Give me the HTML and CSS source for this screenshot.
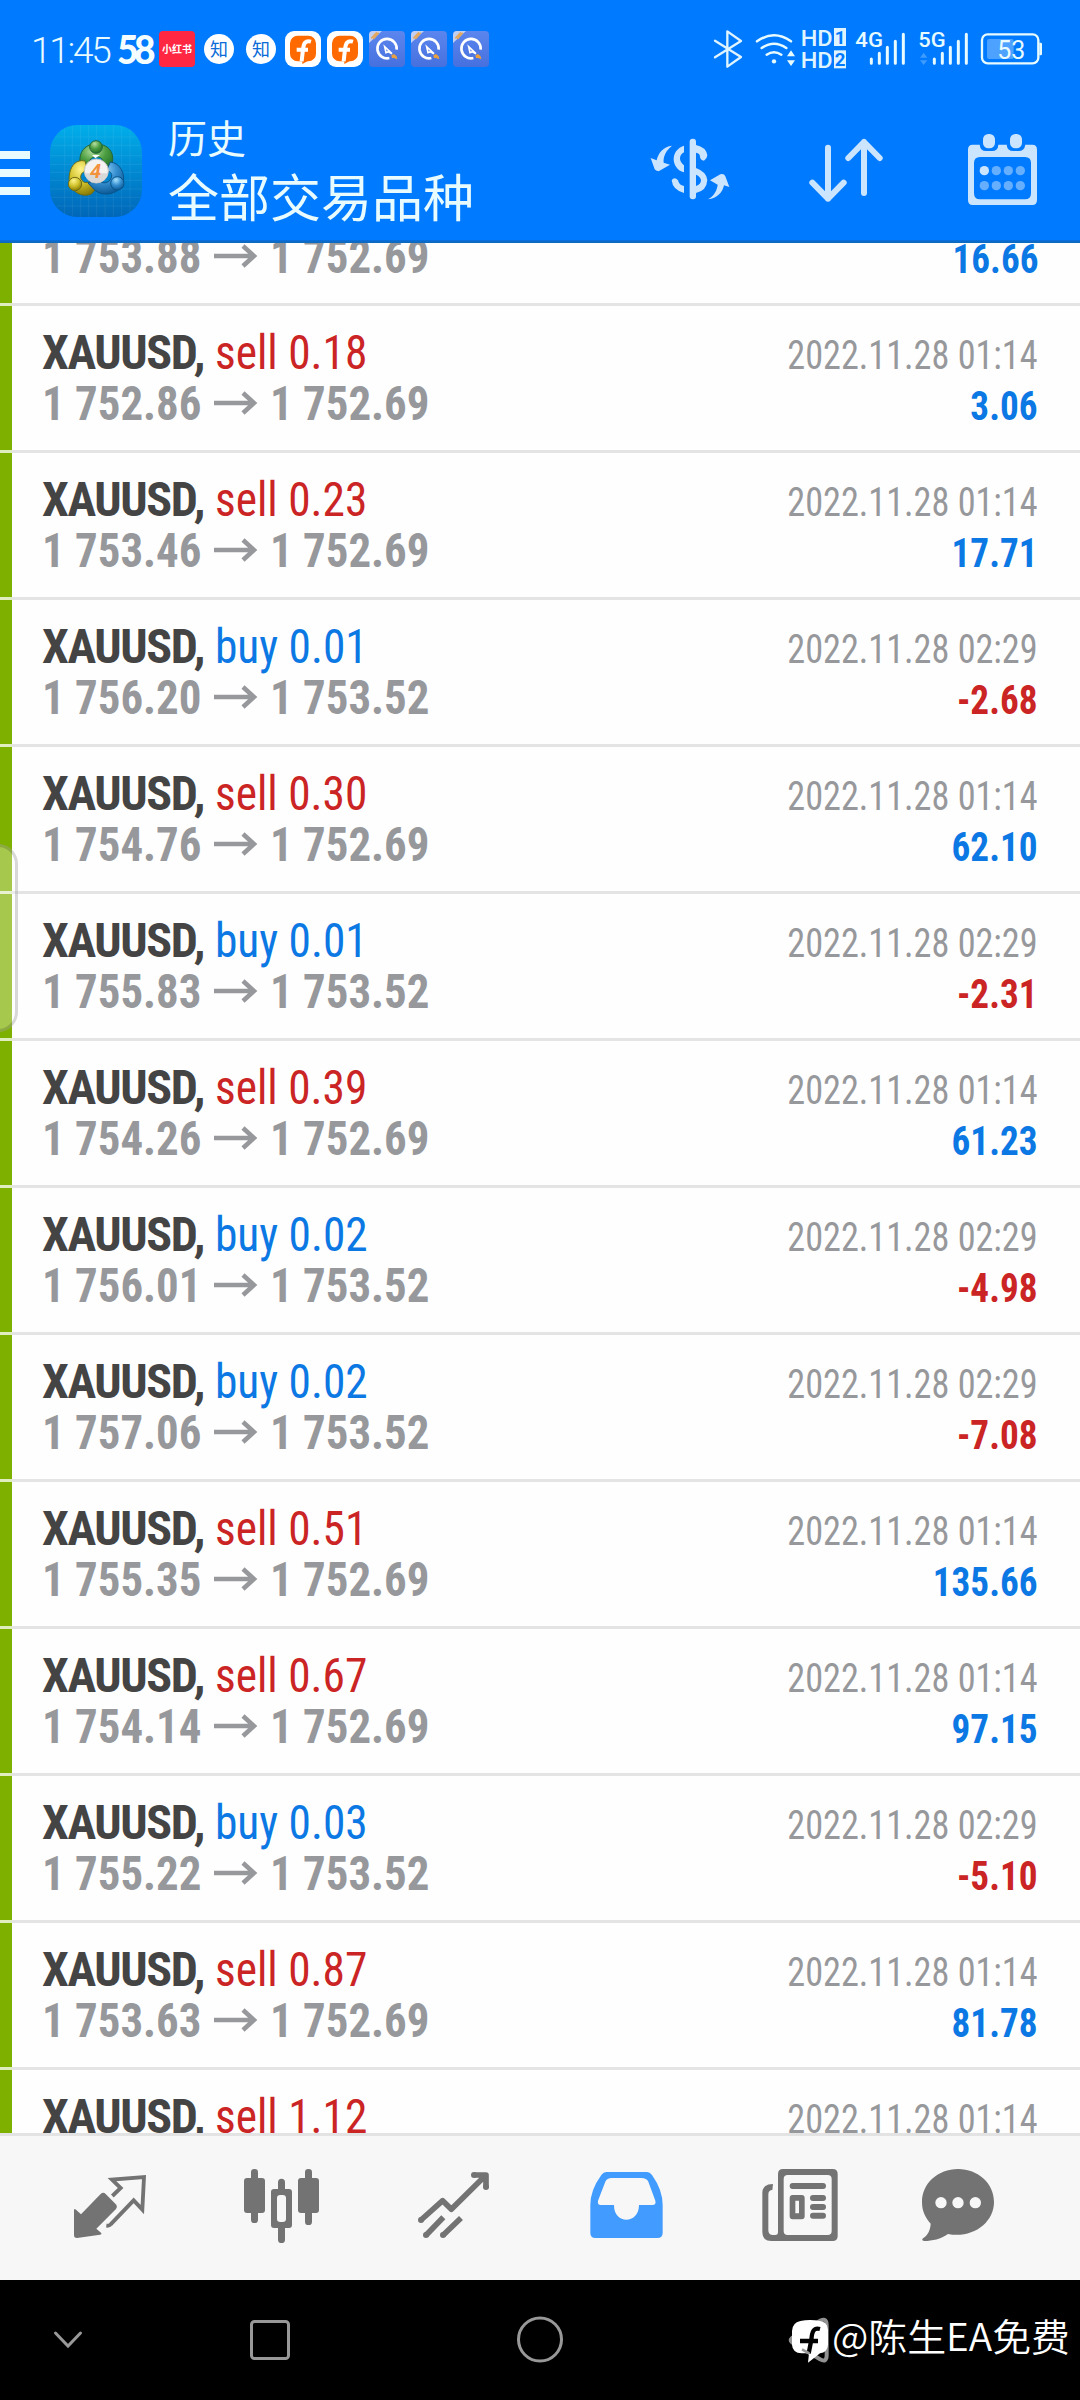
FILE: index.html
```html
<!DOCTYPE html>
<html lang="zh">
<head>
<meta charset="utf-8">
<title>历史</title>
<link rel="stylesheet" href="styles.css">
</head>
<body>
<div class="screen">
  <header class="header">
    <div class="status">
      <span class="clock">11:45</span>
      <div class="notices">
        <span class="n58">58</span>
        <span class="xhs">小红书</span>
        <span class="zhi">知</span>
        <span class="zhi">知</span>
        <svg class="notice" viewBox="855 93 108 108"><use href="#fnotice"/></svg>
        <svg class="notice" viewBox="855 93 108 108"><use href="#fnotice"/></svg>
        <svg class="notice" viewBox="1107 93 108 108"><use href="#qnotice"/></svg>
        <svg class="notice" viewBox="1107 93 108 108"><use href="#qnotice"/></svg>
        <svg class="notice" viewBox="1107 93 108 108"><use href="#qnotice"/></svg>
      </div>
      <div class="signals">
        <svg class="bt" viewBox="273 78 108 132"><path d="M285 122L363 171L322 200V94L363 123L285 172" fill="none" stroke="#dff4ff" stroke-width="7" stroke-linejoin="round" stroke-linecap="round"/></svg>
        <svg class="wifi" viewBox="402 78 129 132" fill="none" stroke="#e8fbff" stroke-width="7.5" stroke-linecap="round"><path d="M411 124Q462 88 513 124M425 144Q462 118 499 144M440 164Q462 149 484 164"/><circle cx="462" cy="184" r="6.500" fill="#e8fbff" stroke="none"/><path d="M501 169L513 151L525 169ZM501 181L513 198L525 181Z" fill="#e8fbff" stroke="none"/></svg>
        <svg class="hd" viewBox="540 78 144 132" fill="#dff4ff"><rect x="642" y="84" width="36" height="54"/><rect x="642" y="151" width="36" height="54"/><g font-size="67" font-weight="500"><text x="542" y="137" textLength="96" lengthAdjust="spacingAndGlyphs">HD</text><text x="542" y="205" textLength="96" lengthAdjust="spacingAndGlyphs">HD</text></g><g font-size="56" font-weight="700" fill="#007aff"><text x="644" y="131">1</text><text x="644" y="198">2</text></g></svg>
        <svg class="net" viewBox="702 78 159 132"><text x="706" y="141" font-size="63" font-weight="500" fill="#e8fbff" textLength="83" lengthAdjust="spacingAndGlyphs">4G</text><path class="bars" d="M754 177V190M778 160V190M802 142V190M826 124V190M850 103V190"/></svg>
        <svg class="net" viewBox="891 78 159 132"><text x="895" y="141" font-size="63" font-weight="500" fill="#e8fbff" textLength="82" lengthAdjust="spacingAndGlyphs">5G</text><path d="M900 173L911 158L922 173ZM900 181L911 195L922 181Z" fill="#3f9cff"/><path class="bars" d="M943 177V190M967 160V190M991 142V190M1015 124V190M1039 103V190"/></svg>
        <svg class="battery" viewBox="1080 78 189 132"><rect x="1086" y="103" width="169" height="87" rx="17" fill="none" stroke="#e8fbff" stroke-width="7"/><rect x="1101" y="117" width="80" height="60" rx="6" fill="#4da2ff"/><path d="M1258 128h4q4 0 4 4v30q0 4-4 4h-4z" fill="#e8fbff"/><text x="1132" y="177" font-size="80" fill="#e8fbff" textLength="84" lengthAdjust="spacingAndGlyphs">53</text></svg>
      </div>
    </div>
    <div class="toolbar">
      <div class="menu"><i></i><i></i><i></i></div>
      <svg class="app" viewBox="150 374 276 276">
        <defs>
          <linearGradient id="sky" x1="0" y1="0" x2="0" y2="1"><stop offset="0" stop-color="#00aeea"/><stop offset=".5" stop-color="#0089d2"/><stop offset="1" stop-color="#0066b8"/></linearGradient>
          <radialGradient id="gr" cx=".4" cy=".25" r=".8"><stop offset="0" stop-color="#b4dfa0"/><stop offset=".5" stop-color="#4b9d40"/><stop offset="1" stop-color="#1d6a28"/></radialGradient>
          <radialGradient id="ye" cx=".4" cy=".25" r=".8"><stop offset="0" stop-color="#fff48b"/><stop offset=".5" stop-color="#d1c22d"/><stop offset="1" stop-color="#827500"/></radialGradient>
          <radialGradient id="bl" cx=".4" cy=".25" r=".8"><stop offset="0" stop-color="#a5e0ff"/><stop offset=".5" stop-color="#368fd0"/><stop offset="1" stop-color="#07538f"/></radialGradient>
          <linearGradient id="qbg" x1="0" y1="0" x2="0" y2="1"><stop offset="0" stop-color="#5c86ee"/><stop offset="1" stop-color="#4670de"/></linearGradient>
          <g id="fnotice"><rect x="855" y="93" width="108" height="108" rx="27" fill="#fff"/><rect x="870" y="107" width="78" height="77" rx="23" fill="#ff6a00"/><path d="M907 192V177L930 179Z" fill="#ff6a00"/><path d="M890 149H924M933 125C916 120 911 130 909 148L905 184" fill="none" stroke="#fff" stroke-width="12"/></g>
          <g id="qnotice"><rect x="1107" y="93" width="108" height="108" rx="12" fill="url(#qbg)"/><path d="M1107 129V105Q1107 93 1119 93H1146Z" fill="#c3cff0"/><path d="M1114 115L1131 97M1120 117L1136 98" stroke="#e1a85f" stroke-width="5"/><path d="M1168 174A29 29 0 1 1 1190 149" fill="none" stroke="#fff" stroke-width="8"/><path d="M1154 140L1158 158L1165 155L1176 161Z" fill="none" stroke="#fff" stroke-width="5"/><path d="M1174 166L1182 162L1190 169L1192 178L1182 174L1176 174Z" fill="#e9a040"/></g>
        </defs>
        <rect x="150" y="374" width="276" height="276" rx="82" fill="url(#sky)"/>
        <path d="M194 382V642M217 376V648M242 374V650M266 374V650M290 374V650M315 374V650M340 374V650M365 376V648M390 388V636M170 410H406M156 435H420M150 466H426M150 492H426M150 516H426M150 540H426M150 566H426M156 591H420M170 617H406" stroke="#fff" opacity=".1" stroke-width="2"/>
        <g stroke-width="3">
          <path d="M248 503C230 478 243 439 274 433H304C340 440 350 484 323 511L302 505C314 486 309 468 289 470C268 470 263 486 274 499Z" fill="url(#gr)" stroke="#236535"/>
          <path d="M255 482C223 475 204 506 208 545C214 574 245 593 274 581L294 560L275 541C260 552 243 546 242 530C243 514 256 512 264 514Z" fill="url(#ye)" stroke="#6f6c16"/>
          <path d="M331 485C361 488 377 520 369 551C355 582 311 590 286 571L264 548L288 537C306 553 327 550 334 532C339 518 329 511 318 514Z" fill="url(#bl)" stroke="#09558b"/>
          <path d="M276 464L286 474L300 464" fill="#fff" stroke="none"/>
          <circle cx="288" cy="440" r="19" fill="url(#gr)" stroke="#236535"/><circle cx="225" cy="551" r="20" fill="url(#ye)" stroke="#6f6c16"/><circle cx="352" cy="549" r="20" fill="url(#bl)" stroke="#09558b"/>
          <circle cx="289" cy="512" r="36" fill="#f4f2f0" stroke="#c2c2c0"/>
        </g>
        <path d="M254 519H324A36 36 0 0 1 254 519Z" fill="#d9d8d8"/>
        <text x="270" y="533" font-size="60" font-weight="700" font-style="italic" fill="#f2913e">4</text>
      </svg>
      <div class="titles"><div class="sub">历史</div><div class="main">全部交易品种</div></div>
      <div class="actions">
        <svg viewBox="-24 390 468 240" fill="#cce5ff"><rect x="209" y="416" width="19" height="182" rx="9"/><path d="M192 437V457C175 467 177 484 192 496V517C153 506 149 451 192 437ZM155 541Q163 528 174 541Q177 556 192 558V579Q158 570 155 541ZM228 435Q258 441 262 466Q261 477 252 482Q241 480 240 471Q240 459 228 458ZM228 504Q260 516 262 540Q260 572 228 579V558Q243 553 243 541Q242 530 228 524Z"/><path d="M156 437C137 452 129 471 131 488L150 494L116 514Q107 513 104 508L92 474L110 481C115 459 129 440 156 437ZM264 598C282 589 292 568 293 554L270 541L301 523Q312 520 316 529L328 561L312 556C307 578 292 595 264 598Z"/></svg>
        <svg viewBox="444 390 468 240" fill="none" stroke="#cce5ff" stroke-width="18" stroke-linecap="round" stroke-linejoin="round"><path d="M624 443V596M577 548L624 596L671 548M732 579V426M685 474L732 426L779 474"/></svg>
        <svg viewBox="912 390 468 240" fill="#cce5ff"><path fill-rule="evenodd" d="M1058 434H1079Q1081 453 1098 453H1116Q1134 453 1135 434H1160Q1162 453 1180 453H1196Q1213 453 1216 434H1237Q1251 434 1251 449V600Q1251 615 1237 615H1058Q1044 615 1044 600V449Q1044 434 1058 434ZM1080 471Q1062 471 1062 489V580Q1062 598 1080 598H1215Q1233 598 1233 580V489Q1233 471 1215 471Z"/><rect x="1089" y="402" width="36" height="43" rx="16"/><rect x="1170" y="402" width="36" height="43" rx="16"/><circle cx="1093" cy="512" r="14"/><g fill="#66afff"><circle cx="1129" cy="512" r="14"/><circle cx="1165" cy="512" r="14"/><circle cx="1201" cy="512" r="14"/><circle cx="1093" cy="557" r="14"/><circle cx="1129" cy="557" r="14"/><circle cx="1165" cy="557" r="14"/><circle cx="1201" cy="557" r="14"/></g></svg>
      </div>
    </div>
  </header>
  <main class="list" id="list"></main>
  <nav class="tabs">
    <svg viewBox="-108 0 516 270"><path d="M42 150Q43 145 48 149L63 163L122 102Q130 95 137 102L169 134Q173 141 168 147L109 206L123 218Q127 222 120 224L51 234Q42 234 42 226Z"/><path d="M157 108L182 84L156 59L252 51L247 149L221 121L152 193Q148 198 139 197" fill="none" stroke="#737373" stroke-width="11.500"/></svg>
    <svg viewBox="408 0 516 270"><rect x="552" y="54" width="63" height="105" rx="9"/><rect x="573" y="27" width="21" height="162" rx="10"/><rect x="714" y="54" width="63" height="105" rx="9"/><rect x="735" y="27" width="21" height="168" rx="10"/><path fill-rule="evenodd" d="M642 87H654V67Q654 56 664.500 56T675 67V87H687Q696 87 696 96V195Q696 204 687 204H675V239Q675 249 664.500 249T654 239V204H642Q633 204 633 195V96Q633 87 642 87ZM661 105Q651 105 651 114V177Q651 186 661 186H668Q678 186 678 177V114Q678 105 668 105Z"/></svg>
    <svg viewBox="924 0 516 270"><path d="M1083 180L1148 122L1174 148L1275 48M1242 45H1278V82M1098 226L1150 172M1149 226L1203 174" fill="none" stroke="#737373" stroke-width="17" stroke-linejoin="round"/><circle cx="1083" cy="180" r="9"/><circle cx="1098" cy="225" r="9"/><circle cx="1149" cy="225" r="9"/><circle cx="1242" cy="45" r="9"/><circle cx="1278" cy="81" r="9"/></svg>
    <svg viewBox="-90 0 516 270"><path class="active" fill-rule="evenodd" d="M109 36H231Q240 36 246 45Q278 90 278 135V218Q278 234 262 234H76Q61 234 61 218V135Q61 90 94 45Q100 36 109 36ZM125 54Q111 54 106 65L84 122Q82 135 92 135H132C131 194 207 194 207 135H247Q259 135 256 122L235 65Q230 54 214 54Z"/></svg>
    <svg viewBox="426 0 516 270"><path fill-rule="evenodd" d="M639 27H788Q803 27 803 42V228Q803 243 788 243H604Q577 243 577 216V99Q577 72 609 72L607 90Q595 90 595 104V211Q595 225 609 225H616Q624 225 624 216V42Q624 27 639 27ZM653 45Q641 45 641 57V213Q641 225 653 225H773Q785 225 785 213V57Q785 45 773 45Z"/><rect x="659" y="69" width="109" height="18" rx="9"/><path fill-rule="evenodd" d="M668 105H695Q704 105 704 114V169Q704 178 695 178H668Q659 178 659 169V114Q659 105 668 105ZM676 122V160H687V122Z"/><rect x="720" y="105" width="48" height="18" rx="9"/><rect x="720" y="132" width="48" height="18" rx="9"/><rect x="720" y="158" width="48" height="18" rx="9"/></svg>
    <svg viewBox="942 0 516 270"><path d="M1164 27C1224 27 1272 70 1272 126C1272 190 1206 236 1134 222C1112 237 1088 243 1062 243Q1053 241 1059 235C1075 224 1081 209 1082 191C1067 174 1056 155 1056 126C1056 70 1104 27 1164 27Z"/><g fill="#f7f7f7"><circle cx="1113" cy="128" r="17"/><circle cx="1164" cy="128" r="17"/><circle cx="1216" cy="128" r="17"/></g></svg>
  </nav>
  <footer class="sysnav">
    <svg width="136" viewBox="0 0 136 120"><path d="M55.500 53L68 66L80.500 53"/></svg>
    <svg width="268" viewBox="0 0 268 120"><rect x="115.500" y="41.500" width="37" height="37" rx="3"/></svg>
    <svg width="272" viewBox="0 0 272 120"><circle cx="136" cy="59.500" r="21.500"/></svg>
  </footer>
  <svg class="mark" viewBox="0 0 900 300"><path d="M108 100L36 144Q28 150 36 157L120 208Q140 219 140 196V105Q140 76 108 100Z" fill="none" stroke="#929292" stroke-width="12"/><path d="M61 93Q90 87 120 93Q143 96 144 120V165Q142 187 120 190L84 218L87 190H65Q37 188 36 164V123Q37 98 61 93Z" fill="#fff"/><path d="M60 153H114M120 117C101 112 96 124 94 150L86 190" fill="none" stroke="#000" stroke-width="13"/><path d="M66 178L88 190" stroke="#999" stroke-width="8"/><text x="156" y="184" font-size="114" fill="#fff" textLength="714" lengthAdjust="spacingAndGlyphs">@陈生EA免费</text></svg>
  <div class="handle"></div>
</div>
<script src="list.js"></script>
</body>
</html>
```
FILE: styles.css
```css
* { box-sizing: border-box; }
body { margin: 0; }
svg { display: block; flex: none; }
.screen { position: relative; width: 1080px; height: 2400px; overflow: hidden; background: #fff; display: flex; flex-direction: column; }
.header { height: 243px; flex: none; background: linear-gradient(#0a6fdd, #0d68bb) bottom / 100% 3px no-repeat #007aff; font-family: "Noto Sans CJK SC", sans-serif; }
.status { height: 94px; display: flex; padding: 26px 37px 0 31px; font-family: Roboto, sans-serif; }
.clock { width: 86px; height: 44px; font-size: 37px; line-height: 50px; font-weight: 350; letter-spacing: -2.3px; color: #e8fbff; }
.notices { display: flex; gap: 6px; height: 36px; margin-top: 5px; }
.notices > * { width: 36px; height: 36px; flex: none; }
.n58 { font: 900 40px/37px Lato, sans-serif; letter-spacing: -5px; color: #f4fdff; transform: scaleX(.93); transform-origin: left; }
.xhs { background: #ff2742; border-radius: 4px; color: #fff; font: 700 10px/35px "Noto Sans CJK SC", sans-serif; text-align: center; white-space: nowrap; }
.notices .zhi { width: 30px; height: 30px; margin: 3px; border-radius: 50%; background: #fff; color: #0a6bd8; font: 400 18px/29px "Noto Sans CJK SC", sans-serif; text-align: center; }
.signals { display: flex; margin-left: auto; height: 44px; }
.signals svg { height: 44px; font-family: Roboto, sans-serif; overflow: visible; }
.bt { width: 36px; margin-right: 7px; }
.wifi { width: 43px; margin-right: 3px; }
.hd { width: 48px; margin-right: 6px; }
.net { width: 53px; margin-right: 10px; }
.battery { width: 63px; }
.bars { stroke: #e8fbff; stroke-width: 9; stroke-linecap: round; }
.toolbar { display: flex; height: 146px; }
.menu { width: 30px; height: 44px; margin-top: 57px; display: flex; flex-direction: column; gap: 10px; }
.menu i { height: 8px; background: #e8fbff; }
.app { width: 92px; height: 92px; margin: 31px 0 0 20px; font-family: Roboto, sans-serif; }
.titles { margin: 16px 0 0 26px; color: #e8fbff; font-weight: 400; white-space: nowrap; }
.sub { font-size: 39px; line-height: 52px; }
.main { font-size: 51px; line-height: 66px; }
.actions { display: flex; margin: 36px 0 0 auto; }
.actions svg { width: 156px; height: 80px; }
.list { height: 1890px; flex: none; overflow: hidden; font-family: "Roboto Condensed", Roboto, sans-serif; }
.row { height: 147px; display: flex; justify-content: space-between; padding: 0 42px; white-space: nowrap;
  background: linear-gradient(to right, #dfedbf 12px, #e4e4e4 12px) bottom / 100% 3px no-repeat, linear-gradient(to right, #7eb000 12px, #fefefe 12px); }
.row:first-child { margin-top: -84px; }
.deal { padding-top: 21px; font-size: 48px; }
.result { padding-top: 24px; font-size: 40px; text-align: right; }
.deal > div, .result > div { height: 51px; line-height: 51px; }
.symbol { display: inline-block; width: 173px; font-weight: 700; color: #444; letter-spacing: -1.4px; }
.side { display: inline-block; transform: scaleX(.945); transform-origin: left; }
.sell { color: #cb2424; }
.buy { color: #0c78e4; }
.prices { display: flex; align-items: center; font-weight: 700; color: #97989b; }
.price { transform: scaleX(.935); transform-origin: left; }
.open { width: 172px; display: flex; }
.arrow { width: 44px; height: 24px; margin-right: 12px; margin-top: -1px; }
.time { color: #97989b; transform: scaleX(.905); transform-origin: right; }
.profit { font-weight: 700; transform: scaleX(.93); transform-origin: right; }
.tabs { height: 147px; flex: none; background: #f7f7f7; border-top: 3px solid #e3e3e3; padding: 24px 24px 0; display: flex; }
.tabs svg { width: 172px; height: 90px; fill: #737373; }
.tabs .active { fill: #429cff; }
.sysnav { height: 120px; background: #000; display: flex; }
.sysnav svg { height: 120px; fill: none; stroke: #989898; stroke-width: 3; stroke-linecap: round; }
.mark { position: absolute; left: 780px; top: 2290px; width: 300px; height: 100px; font-family: "Noto Sans CJK SC", sans-serif; font-weight: 350; }
.handle { position: absolute; left: -22px; top: 844px; width: 40px; height: 188px; border-radius: 30px; border: 3px solid rgba(0, 0, 0, .15); background: rgba(255, 255, 255, .3); }
```
FILE: list.js
```js
// type, volume, open price, close price, time, profit
// rows scrolled partly out of view leave out the line that is not visible
const deals = [
  ["", "", "1 753.88", "1 752.69", "", "16.66"],
  ["sell", "0.18", "1 752.86", "1 752.69", "01:14", "3.06"],
  ["sell", "0.23", "1 753.46", "1 752.69", "01:14", "17.71"],
  ["buy", "0.01", "1 756.20", "1 753.52", "02:29", "-2.68"],
  ["sell", "0.30", "1 754.76", "1 752.69", "01:14", "62.10"],
  ["buy", "0.01", "1 755.83", "1 753.52", "02:29", "-2.31"],
  ["sell", "0.39", "1 754.26", "1 752.69", "01:14", "61.23"],
  ["buy", "0.02", "1 756.01", "1 753.52", "02:29", "-4.98"],
  ["buy", "0.02", "1 757.06", "1 753.52", "02:29", "-7.08"],
  ["sell", "0.51", "1 755.35", "1 752.69", "01:14", "135.66"],
  ["sell", "0.67", "1 754.14", "1 752.69", "01:14", "97.15"],
  ["buy", "0.03", "1 755.22", "1 753.52", "02:29", "-5.10"],
  ["sell", "0.87", "1 753.63", "1 752.69", "01:14", "81.78"],
  ["sell", "1.12", "", "", "01:14", ""]
];
const arrow = `<svg class="arrow" viewBox="0 0 44 24"><path d="M0 12H40M29 2L40 12L29 22" fill="none" stroke="#97989b" stroke-width="4.5"/></svg>`;
document.getElementById("list").innerHTML = deals.map(([type, volume, open, close, time, profit]) => `
  <div class="row">
    <div class="deal">
      <div>${type ? `<span class="symbol">XAUUSD,</span><span class="side ${type}">${type} ${volume}</span>` : ""}</div>
      <div class="prices">${open ? `<span class="open"><span class="price">${open}</span></span>${arrow}<span class="price">${close}</span>` : ""}</div>
    </div>
    <div class="result">
      <div class="time">${time ? `2022.11.28 ${time}` : ""}</div>
      <div class="profit ${profit[0] === "-" ? "sell" : "buy"}">${profit}</div>
    </div>
  </div>`).join("");
```
